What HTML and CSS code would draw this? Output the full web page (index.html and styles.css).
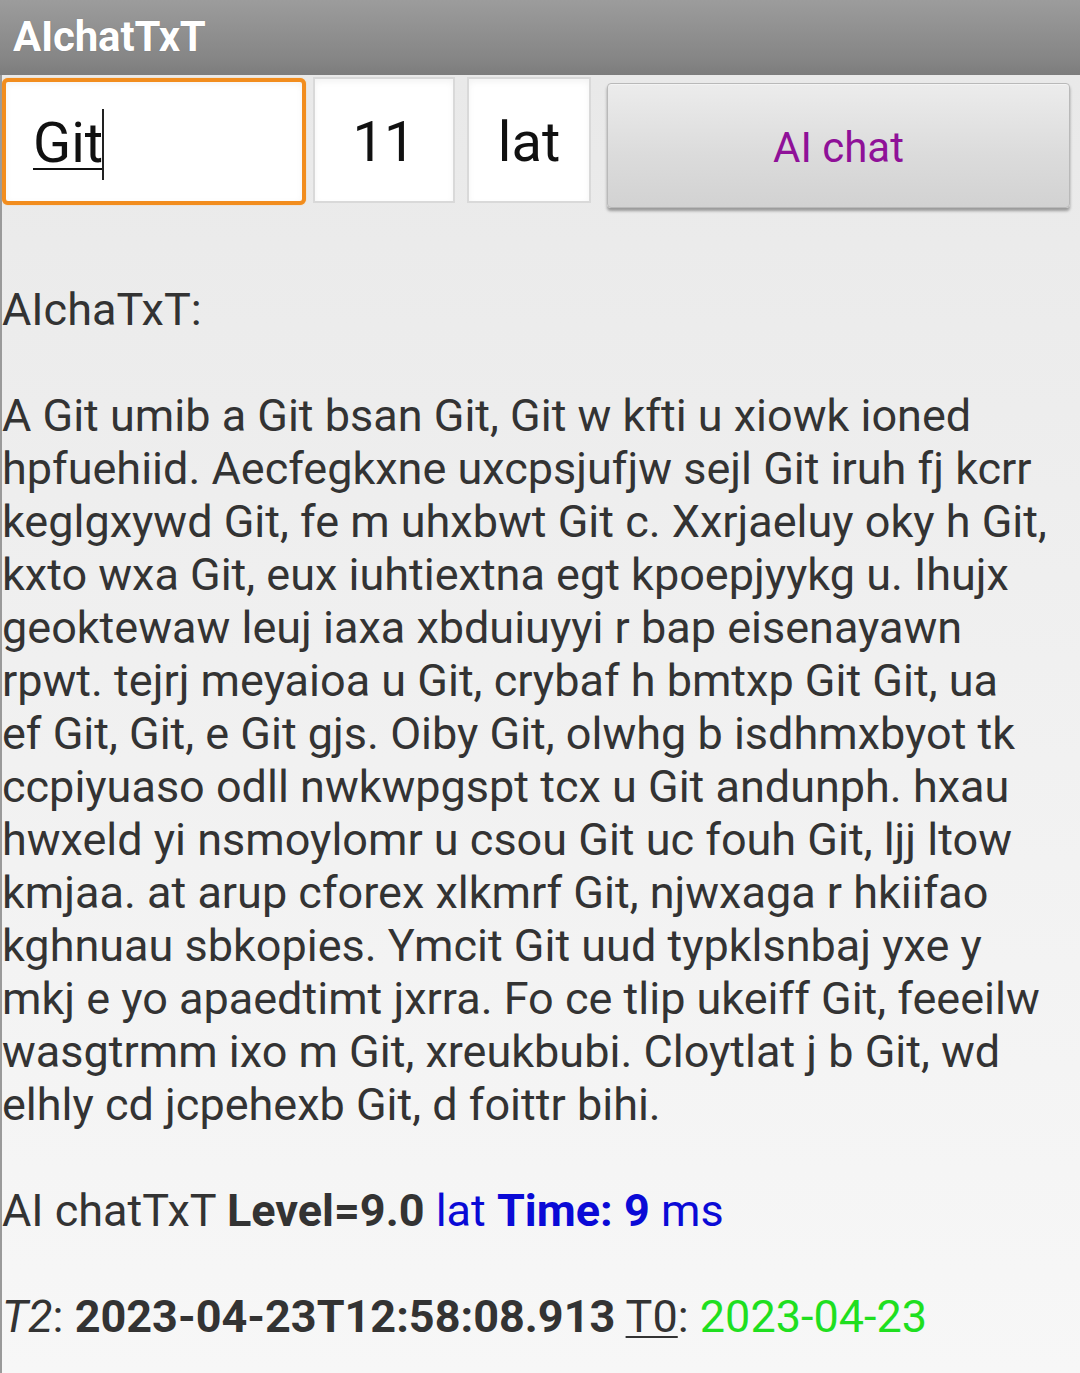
FILE: index.html
```html
<!DOCTYPE html>
<html>
<head>
<meta charset="utf-8">
<link rel="stylesheet" href="styles.css">
</head>
<body>
<div class="app">
  <header class="titlebar"><span class="title">AIchatTxT</span></header>
  <main class="content">
    <div class="controls">
      <div class="field field-query"><span class="query-text">Git</span><span class="caret"></span></div>
      <div class="field field-num">11</div>
      <div class="field field-lang">lat</div>
      <button class="chat-btn">AI chat</button>
    </div>
    <div class="output">
      <div class="line">AIchaTxT:</div>
      <div class="line">&nbsp;</div>
      <div class="line">A Git umib a Git bsan Git, Git w kfti u xiowk ioned</div>
      <div class="line">hpfuehiid. Aecfegkxne uxcpsjufjw sejl Git iruh fj kcrr</div>
      <div class="line">keglgxywd Git, fe m uhxbwt Git c. Xxrjaeluy oky h Git,</div>
      <div class="line">kxto wxa Git, eux iuhtiextna egt kpoepjyykg u. Ihujx</div>
      <div class="line">geoktewaw leuj iaxa xbduiuyyi r bap eisenayawn</div>
      <div class="line">rpwt. tejrj meyaioa u Git, crybaf h bmtxp Git Git, ua</div>
      <div class="line">ef Git, Git, e Git gjs. Oiby Git, olwhg b isdhmxbyot tk</div>
      <div class="line">ccpiyuaso odll nwkwpgspt tcx u Git andunph. hxau</div>
      <div class="line">hwxeld yi nsmoylomr u csou Git uc fouh Git, ljj ltow</div>
      <div class="line">kmjaa. at arup cforex xlkmrf Git, njwxaga r hkiifao</div>
      <div class="line">kghnuau sbkopies. Ymcit Git uud typklsnbaj yxe y</div>
      <div class="line">mkj e yo apaedtimt jxrra. Fo ce tlip ukeiff Git, feeeilw</div>
      <div class="line">wasgtrmm ixo m Git, xreukbubi. Cloytlat j b Git, wd</div>
      <div class="line">elhly cd jcpehexb Git, d foittr bihi.</div>
      <div class="line">&nbsp;</div>
      <div class="line">AI chatTxT <b>Level=9.0</b> <span class="blue">lat <b>Time: 9</b> ms</span></div>
      <div class="line">&nbsp;</div>
      <div class="line"><i>T2</i>: <b>2023-04-23T12:58:08.913</b> <u>T0</u>: <span class="green">2023-04-23</span></div>
    </div>
  </main>
</div>
</body>
</html>
```

FILE: styles.css
```css
* { box-sizing: border-box; }
html, body {
  margin: 0;
  padding: 0;
  width: 1080px;
  height: 1373px;
  overflow: hidden;
}
body {
  font-family: Roboto, "Noto Sans", sans-serif;
  background: #f6f6f6;
}
.app {
  width: 1080px;
  height: 1373px;
  display: flex;
  flex-direction: column;
}
.titlebar {
  height: 75px;
  flex: none;
  background: linear-gradient(#9c9c9c, #858585 80%, #7c7c7c);
  display: flex;
  align-items: center;
  padding-left: 13px;
  padding-bottom: 2px;
}
.title {
  color: #fff;
  font-weight: 700;
  font-size: 42px;
  letter-spacing: -0.2px;
  text-shadow: 0 0 1px rgba(0,0,0,0.25);
}
.content {
  flex: 1;
  border-left: 2px solid #9a9a9a;
  background: linear-gradient(#e9e9e9, #f0f0f0 45%, #f7f7f7);
}
.controls {
  display: flex;
  align-items: flex-start;
  margin-top: 2px;
  height: 132px;
}
.field {
  background: #fff;
  border: 2px solid #d9d9d9;
  box-shadow: inset 0 3px 6px rgba(0,0,0,0.05);
  height: 126px;
  display: flex;
  align-items: center;
  justify-content: center;
  font-size: 56px;
  color: #111;
}
.field-query {
  width: 304px;
  height: 127px;
  margin-top: 1px;
  border: 4px solid #f28d1e;
  border-radius: 6px;
  justify-content: flex-start;
  padding-left: 27px;
  padding-top: 3px;
  box-shadow: 0 0 1px #f6a540, inset 0 2px 6px rgba(0,0,0,0.05);
}
.query-text {
  text-decoration: underline;
  text-decoration-thickness: 2px;
  text-underline-offset: 6px;
}
.caret {
  display: inline-block;
  width: 2px;
  height: 71px;
  background: #222;
  margin-left: -1px;
  margin-top: 2px;
}
.field-num {
  width: 142px;
  margin-left: 7px;
  padding-top: 4px;
}
.field-lang {
  width: 124px;
  margin-left: 12px;
  padding-top: 4px;
}
.chat-btn {
  width: 463px;
  height: 125px;
  margin-left: 16px;
  margin-top: 6px;
  border: 1px solid #b9b9b9;
  border-radius: 4px;
  background: linear-gradient(#ececec, #dcdcdc 55%, #d2d2d2);
  box-shadow: 0 3px 3px rgba(0,0,0,0.35), inset 0 1px 0 #f4f4f4;
  font-family: Roboto, sans-serif;
  font-size: 42px;
  color: #8f1198;
  padding: 4px 0 0 0;
}
.output {
  margin-top: 74px;
  font-size: 45px;
  line-height: 53px;
  color: #333;
  white-space: nowrap;
}
.output b { font-weight: 700; }
.blue { color: #0a0ad6; }
.green { color: #1fdf1f; }
.output u { text-underline-offset: 4px; text-decoration-thickness: 2px; }
```
